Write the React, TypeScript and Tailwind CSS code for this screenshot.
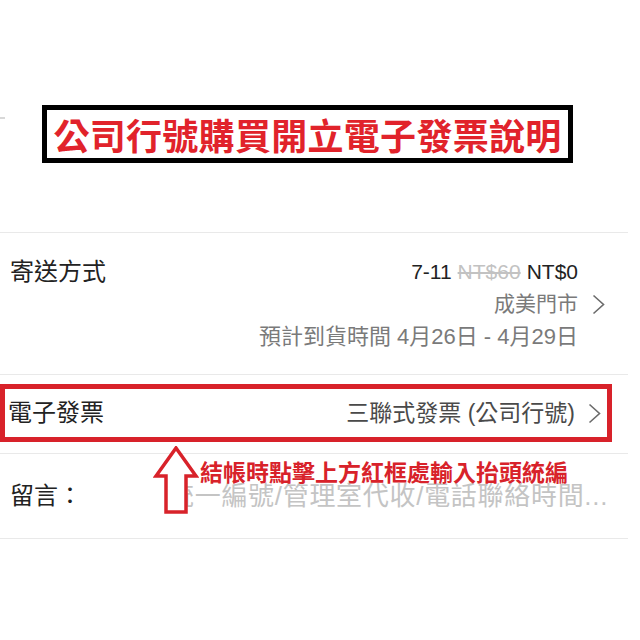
const font = "font-['Liberation_Sans','Noto_Sans_CJK_TC',sans-serif]";

function Chevron() {
  return (
    <svg width="13" height="21" viewBox="0 0 13 21" className="shrink-0">
      <polyline points="1.5,1.5 11.5,10.5 1.5,19.5" fill="none" stroke="#6b6b6b" strokeWidth="1.6" />
    </svg>
  );
}

function Divider() {
  return <div className="h-px w-[628px] bg-[#e9e9e9]" />;
}

export default function App() {
  return (
    <div className={`relative h-[640px] w-[640px] overflow-hidden bg-white ${font}`}>
      <div className="absolute left-0 top-[117px] h-[2px] w-[5px] bg-[#d8d8d8]" />

      <div className="pt-[105px]">
        <div className="ml-[42px] flex h-[58px] w-[531px] items-center justify-center border-[5px] border-black">
          <span className="text-[36px] font-bold leading-none tracking-[0.3px] text-[#e1232b] font-['Noto_Sans_CJK_TC',sans-serif]">
            公司行號購買開立電子發票說明
          </span>
        </div>
      </div>

      <div className="mt-[69px]">
        <Divider />

        <div className="flex w-[628px] justify-between pl-[10px] pr-[23px] pt-[22px] pb-[21px]">
          <div className="flex h-[33px] items-center text-[24px] text-[#222]">寄送方式</div>
          <div className="flex flex-col items-end">
            <div className="flex h-[33px] items-center pr-[27px] text-[21px] text-[#222]">
              <span>7-11</span>
              <span className="ml-[6px] text-[#c2c2c2] line-through decoration-[#c2c2c2]">NT$60</span>
              <span className="ml-[6px]">NT$0</span>
            </div>
            <div className="flex h-[32px] items-center gap-[14px] text-[21px] text-[#7a7a7a]">
              <span>成美門市</span>
              <Chevron />
            </div>
            <div className="flex h-[33px] items-center pr-[27px] text-[22px] text-[#7a7a7a]">
              預計到貨時間 4月26日 - 4月29日
            </div>
          </div>
        </div>

        <Divider />

        <div className="mt-[9px] flex h-[58px] w-[612px] items-center justify-between border-[5px] border-[#d8222a] pl-[3px] pr-[6px]">
          <span className="text-[24px] text-[#222]">電子發票</span>
          <div className="flex items-center gap-[13px] text-[23px] text-[#4a4a4a]">
            <span>三聯式發票 (公司行號)</span>
            <Chevron />
          </div>
        </div>

        <div className="mt-[11px]">
          <Divider />
        </div>

        <div className="flex h-[84px] w-[628px] items-center pl-[10px]">
          <span className="w-[158px] text-[24px] text-[#222]">留言：</span>
          <span className="whitespace-nowrap text-[26px] tracking-[0.7px] text-[#c4c4c4]">統一編號/管理室代收/電話聯絡時間...</span>
        </div>

        <Divider />
      </div>

      <svg
        width="46"
        height="70"
        viewBox="0 0 46 70"
        className="absolute left-[153px] top-[446px]"
      >
        <polygon
          points="23,2 43,30 33,30 33,66 13,66 13,30 3,30"
          fill="white"
          stroke="#d8222a"
          strokeWidth="3.5"
          strokeLinejoin="miter"
        />
      </svg>

      <div className="absolute left-[200px] top-[457px] whitespace-nowrap text-[23px] font-bold leading-[28px] text-[#d8222a] font-['Noto_Sans_CJK_TC',sans-serif]">
        結帳時點擊上方紅框處輸入抬頭統編
      </div>
    </div>
  );
}
